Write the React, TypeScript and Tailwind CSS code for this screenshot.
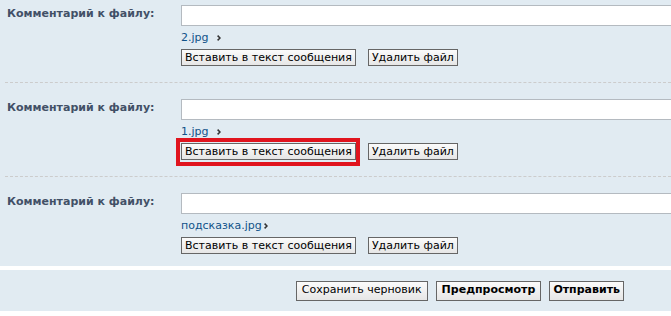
const font = { fontFamily: '"DejaVu Sans", Verdana, sans-serif' };

function Arrow() {
  return (
    <svg width="4" height="6" viewBox="0 0 4 6" className="shrink-0">
      <polyline points="0.6,0.6 3,3 0.6,5.4" fill="none" stroke="#333" strokeWidth="1.5" />
    </svg>
  );
}

function Btn({ children, bold }: { children: React.ReactNode; bold?: boolean }) {
  return (
    <button
      className={`h-[17px] border border-[#666] bg-[linear-gradient(to_bottom,#fbfbfb,#e6e6e6)] px-[3px] text-[11px] leading-[15px] text-black ${
        bold ? "font-bold" : ""
      }`}
    >
      {children}
    </button>
  );
}

function FileRow({
  name,
  arrowGap,
  first,
  last,
  highlight,
}: {
  name: string;
  arrowGap: string;
  first?: boolean;
  last?: boolean;
  highlight?: boolean;
}) {
  return (
    <div
      className={`flex ${first ? "pt-[5px]" : "border-t border-dashed border-[#cccccc] pt-4"} ${
        last ? "pb-3" : "pb-4"
      }`}
    >
      <div className="w-[176px] shrink-0 pl-[2px] pt-[2px] text-[11px] font-bold leading-[13px] text-[#425067]">
        Комментарий к файлу:
      </div>
      <div className="flex flex-col items-start">
        <input className="h-[21px] w-[520px] border border-[#b4bac0] bg-white" />
        <div className="mt-[5px] flex h-[13px] items-center">
          <a className="text-[11px] leading-[13px] text-[#105289]">{name}</a>
          <span className={arrowGap}>
            <Arrow />
          </span>
        </div>
        <div className="mt-[5px] flex gap-[12px]">
          <div className="relative flex">
            {highlight && (
              <span className="pointer-events-none absolute -top-[5px] -bottom-[6px] -left-[5px] -right-[4px] border-4 border-[#e0141e]" />
            )}
            <Btn>Вставить в текст сообщения</Btn>
          </div>
          <Btn>Удалить файл</Btn>
        </div>
      </div>
    </div>
  );
}

export default function App() {
  return (
    <div className="h-[316px] w-[671px] overflow-hidden bg-white" style={font}>
      <div className="bg-[#e1ebf2] pl-[5px]">
        <FileRow name="2.jpg" arrowGap="ml-[8px]" first />
        <FileRow name="1.jpg" arrowGap="ml-[8px]" highlight />
        <FileRow name="подсказка.jpg" arrowGap="ml-[2px]" last />
      </div>
      <div className="mt-[4px] flex h-[41px] items-center justify-end gap-[8px] bg-[#e1ebf2] pr-[47px]">
        <button className="h-[20px] border border-[#666] bg-[linear-gradient(to_bottom,#fbfbfb,#e6e6e6)] px-[5px] text-[11px] text-black">
          Сохранить черновик
        </button>
        <button className="h-[20px] border border-[#666] bg-[linear-gradient(to_bottom,#fbfbfb,#e6e6e6)] px-[5px] text-[11px] font-bold text-black">
          Предпросмотр
        </button>
        <button className="h-[20px] border border-[#666] bg-[linear-gradient(to_bottom,#fbfbfb,#e6e6e6)] px-[3px] text-[11px] font-bold text-black">
          Отправить
        </button>
      </div>
    </div>
  );
}
